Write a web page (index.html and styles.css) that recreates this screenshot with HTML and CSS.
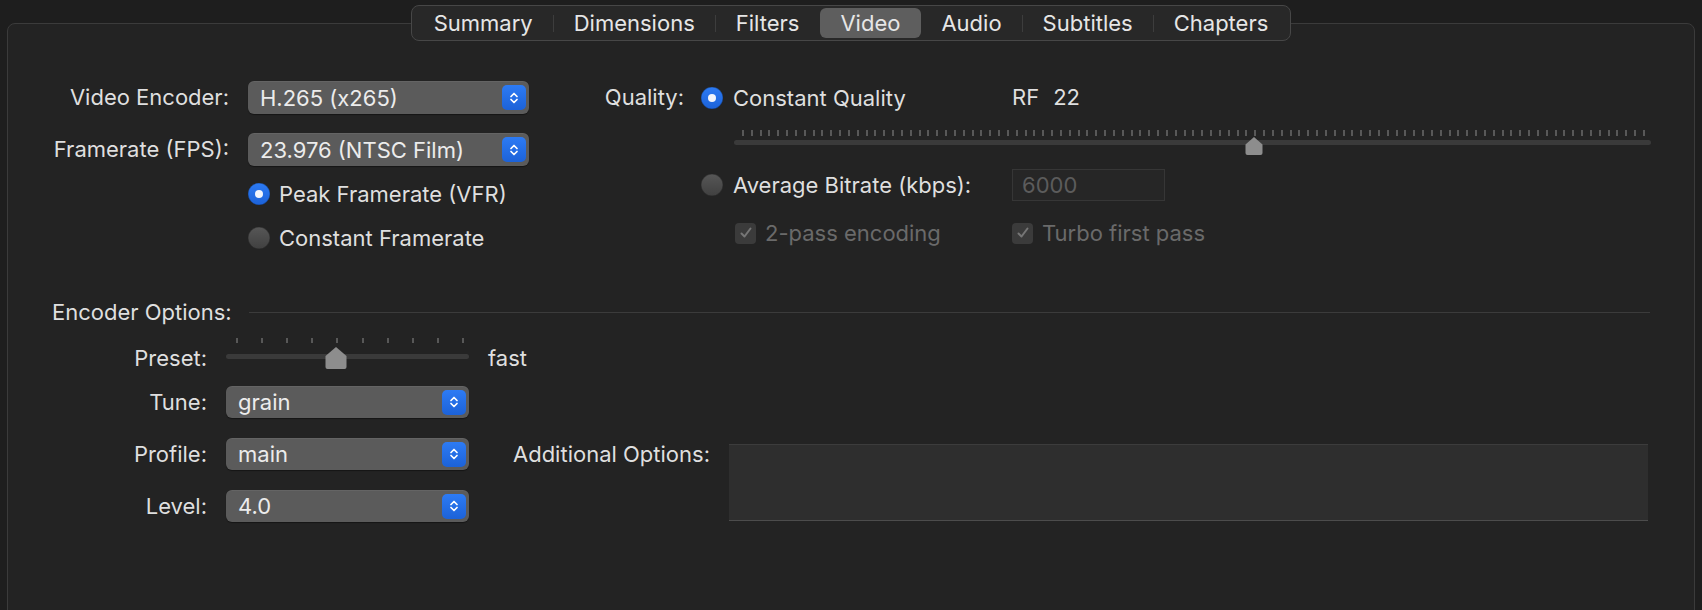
FILE: index.html
```html
<!DOCTYPE html>
<html lang="en">
<head>
  <meta charset="UTF-8">
  <title>Video</title>
  <link rel="stylesheet" href="styles.css">
</head>
<body>
  <div class="window">
    <div class="tabs">
      <span class="tab">Summary</span>
      <span class="tab">Dimensions</span>
      <span class="tab">Filters</span>
      <span class="tab active">Video</span>
      <span class="tab">Audio</span>
      <span class="tab">Subtitles</span>
      <span class="tab">Chapters</span>
    </div>

    <div class="panel">
      <div class="top">
        <div class="frame-grid">
          <label class="lbl">Video Encoder:</label>
          <div class="popup"><span>H.265 (x265)</span><i class="stepper"><svg width="12" height="18" viewBox="0 0 12 18"><path d="M3 7.5 6 4.5 9 7.5M3 10.5 6 13.5 9 10.5"/></svg></i></div>
          <label class="lbl">Framerate (FPS):</label>
          <div class="popup"><span>23.976 (NTSC Film)</span><i class="stepper"><svg width="12" height="18" viewBox="0 0 12 18"><path d="M3 7.5 6 4.5 9 7.5M3 10.5 6 13.5 9 10.5"/></svg></i></div>
          <div class="radio col2"><span class="dot on"></span>Peak Framerate (VFR)</div>
          <div class="radio col2"><span class="dot"></span>Constant Framerate</div>
        </div>

        <div class="quality">
          <label class="lbl q-lbl">Quality:</label>
          <div class="radio"><span class="dot on"></span>Constant Quality</div>
          <div class="rf">RF<span class="rf-val">22</span></div>

          <div class="slider q-slider">
            <div class="ticks"></div>
            <div class="track"></div>
            <svg class="thumb" style="left: calc(8px + 901px * 29 / 51 - 9px)" width="18" height="18" viewBox="0 0 18 18"><path d="M9 0 17.5 7.5V16a2 2 0 0 1-2 2h-13a2 2 0 0 1-2-2V7.5Z"/></svg>
          </div>

          <div class="radio col2"><span class="dot"></span>Average Bitrate (kbps):</div>
          <div class="field">6000</div>

          <div class="check col2"><span class="box"><svg width="14" height="14" viewBox="0 0 14 14"><path d="M2.5 7.5 5.5 10.5 11.5 2.5"/></svg></span>2-pass encoding</div>
          <div class="check turbo"><span class="box"><svg width="14" height="14" viewBox="0 0 14 14"><path d="M2.5 7.5 5.5 10.5 11.5 2.5"/></svg></span>Turbo first pass</div>
        </div>
      </div>

      <div class="enc-head">
        <span>Encoder Options:</span>
        <div class="rule"></div>
      </div>

      <div class="enc">
        <label class="lbl preset-lbl">Preset:</label>
        <div class="slider p-slider">
          <div class="ticks"></div>
          <div class="track"></div>
          <svg class="thumb" style="left: calc(10px + 226px * 4 / 9 - 11px)" width="22" height="22" viewBox="0 0 22 22"><path d="M11 0 21.5 9V20a2 2 0 0 1-2 2h-17a2 2 0 0 1-2-2V9Z"/></svg>
        </div>
        <span class="preset-val">fast</span>
        <div></div>

        <label class="lbl">Tune:</label>
        <div class="popup"><span>grain</span><i class="stepper"><svg width="12" height="18" viewBox="0 0 12 18"><path d="M3 7.5 6 4.5 9 7.5M3 10.5 6 13.5 9 10.5"/></svg></i></div>
        <div></div>
        <div></div>

        <label class="lbl">Profile:</label>
        <div class="popup"><span>main</span><i class="stepper"><svg width="12" height="18" viewBox="0 0 12 18"><path d="M3 7.5 6 4.5 9 7.5M3 10.5 6 13.5 9 10.5"/></svg></i></div>
        <label class="lbl extra-lbl">Additional Options:</label>
        <div class="extra"></div>

        <label class="lbl">Level:</label>
        <div class="popup"><span>4.0</span><i class="stepper"><svg width="12" height="18" viewBox="0 0 12 18"><path d="M3 7.5 6 4.5 9 7.5M3 10.5 6 13.5 9 10.5"/></svg></i></div>
      </div>
    </div>
  </div>
</body>
</html>
```

FILE: styles.css
```css
* {
  box-sizing: border-box;
}

body {
  margin: 0;
  height: 610px;
  overflow: hidden;
  background-color: #1e1e1e;
  font-family: Inter, "Noto Sans", sans-serif;
  font-size: 22px;
  color: #dfdfdf;
}

.window {
  padding: 5px 7px 0;
}

/* segmented tab control */
.tabs {
  position: relative;
  z-index: 1;
  display: flex;
  width: fit-content;
  height: 36px;
  margin: 0 auto;
  padding: 2px 1px;
  border: 1px solid #474747;
  border-radius: 8px;
  background-color: #282828;
}

.tab {
  position: relative;
  padding: 1px 20.5px 0;
  line-height: 29px;
  color: #e6e6e6;
  border-radius: 6px;
}

.tab + .tab::before {
  content: "";
  position: absolute;
  left: 0;
  top: 7px;
  width: 1px;
  height: 17px;
  background-color: #3d3d3d;
}

.tab.active {
  background-color: #5e5e5e;
}

.tab.active::before,
.tab.active + .tab::before {
  display: none;
}

.panel {
  height: 600px;
  margin-top: -18px;
  padding: 57px 44px 0;
  border: 1px solid #3b3b3b;
  border-radius: 8px;
  background-color: #232323;
}

.lbl {
  text-align: right;
  line-height: 33px;
}

.top {
  display: flex;
  gap: 35px;
}

.frame-grid {
  display: grid;
  grid-template-columns: 177px 281px;
  grid-template-rows: 33px 52px 40px 44px;
  column-gap: 19px;
  align-items: end;
}

.col2 {
  grid-column: 2;
}

/* popup buttons */
.popup {
  display: flex;
  align-items: center;
  justify-content: space-between;
  height: 33px;
  padding: 0 3px 0 12px;
  border-radius: 6px;
  background-color: #5b5b5b;
  box-shadow: 0 1px 1px rgba(0, 0, 0, 0.4), inset 0 1px 0 rgba(255, 255, 255, 0.06);
  color: #ececec;
}

.stepper {
  display: flex;
  align-items: center;
  justify-content: center;
  width: 24px;
  height: 25px;
  border-radius: 5px;
  background: linear-gradient(#2d7bf4, #1c62d8);
}

.stepper path {
  fill: none;
  stroke: #fff;
  stroke-width: 1.7;
  stroke-linecap: round;
  stroke-linejoin: round;
}

/* radio buttons */
.radio {
  display: flex;
  align-items: center;
  gap: 9px;
  height: 24px;
}

.dot {
  position: relative;
  flex: none;
  width: 22px;
  height: 22px;
  border-radius: 50%;
  background: linear-gradient(#575757, #404040);
  box-shadow: inset 0 0 0 0.5px rgba(0, 0, 0, 0.3);
}

.dot.on {
  background: linear-gradient(#2d7bf4, #1c62d8);
}

.dot.on::after {
  content: "";
  position: absolute;
  left: 7px;
  top: 7px;
  width: 8px;
  height: 8px;
  border-radius: 50%;
  background-color: #f2f5fc;
}

/* quality block */
.quality {
  display: grid;
  flex: 1;
  grid-template-columns: 137px 311px 1fr;
  grid-template-rows: 33px 42px 45px 44px;
  align-items: end;
}

.quality .radio {
  height: 33px;
  gap: 10px;
}

.q-lbl {
  padding-right: 17px;
}

.rf {
  line-height: 33px;
}

.rf-val {
  margin-left: 14px;
}

.slider {
  position: relative;
}

.ticks {
  height: 6px;
}

.track {
  height: 5px;
  border-radius: 3px;
  background-color: #3a3a3a;
}

.thumb {
  position: absolute;
}

.thumb path {
  fill: #8d8d8d;
}

.q-slider {
  grid-column: 2 / 4;
  height: 26px;
  margin-left: 33px;
  width: 917px;
}

.q-slider .ticks {
  margin: 0 6px 0 8px;
  background: repeating-linear-gradient(90deg, #585858 0 2px, transparent 2px 8.833px);
}

.q-slider .track {
  margin-top: 4px;
}

.q-slider .thumb {
  top: 7px;
}

.field {
  width: 153px;
  height: 32px;
  padding-left: 9px;
  line-height: 30px;
  border: 1px solid #363636;
  background-color: #262626;
  color: #5c5c5c;
}

.check {
  display: flex;
  align-items: center;
  gap: 9px;
  height: 24px;
  color: #6a6a6a;
}

.check.col2 {
  margin-left: 34px;
}

.box {
  display: flex;
  align-items: center;
  justify-content: center;
  width: 21px;
  height: 21px;
  border-radius: 4px;
  background-color: #3b3b3b;
}

.box path {
  fill: none;
  stroke: #767676;
  stroke-width: 2;
  stroke-linecap: round;
  stroke-linejoin: round;
}

/* encoder options */
.enc-head {
  display: flex;
  align-items: center;
  height: 24px;
  margin-top: 50px;
}

.rule {
  flex: 1;
  height: 1px;
  margin-left: 17px;
  background-color: #3b3b3b;
}

.enc {
  display: grid;
  grid-template-columns: 155px 243px 222px 1fr;
  grid-template-rows: 28px 32px 32px 32px;
  gap: 20px 19px;
  margin-top: 14px;
  align-items: center;
}

.enc .popup {
  height: 32px;
}

.enc .lbl {
  line-height: 32px;
}

.enc .preset-lbl,
.preset-val {
  align-self: start;
  margin-top: 8px;
  line-height: 24px;
}

.p-slider {
  align-self: start;
  height: 28px;
}

.p-slider .ticks {
  margin: 0 10px;
  height: 5px;
  background: repeating-linear-gradient(90deg, #585858 0 2px, transparent 2px 25.11px);
  width: 228px;
}

.p-slider .track {
  margin-top: 11px;
}

.p-slider .thumb {
  top: 9px;
}

.extra-lbl {
  justify-self: end;
}

.extra {
  grid-column: 4;
  grid-row: 3 / span 2;
  align-self: start;
  height: 77px;
  margin: 6px 2px 0 0;
  border-top: 1px solid #3c3c3c;
  border-bottom: 1px solid #4c4c4c;
  background-color: #2e2e2e;
}
```
